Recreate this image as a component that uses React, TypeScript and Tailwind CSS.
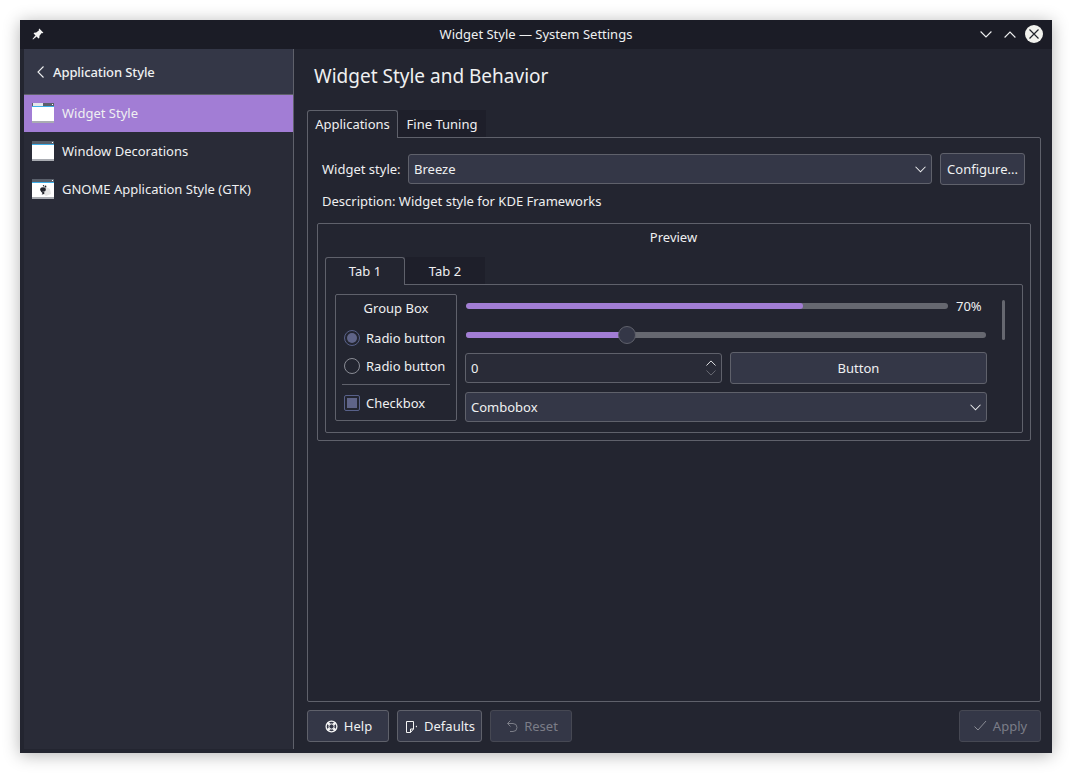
import React from 'react';

const Chevron: React.FC<{ up?: boolean; dim?: boolean; className?: string }> = ({ up, dim, className }) => (
  <svg viewBox="0 0 12 7" className={className} fill="none" stroke="currentColor" strokeWidth="1.1">
    <path d={up ? 'M.6 6.500 6 1l5.400 5.500' : 'M.6.500 6 6l5.400-5.500'} opacity={dim ? 0.35 : 1} />
  </svg>
);

const WindowIcon: React.FC<{ variant: 'widget' | 'deco' | 'gtk' }> = ({ variant }) => (
  <svg width="22" height="20" viewBox="0 0 22 20" className="shrink-0">
    <rect x="0" y="0" width="22" height="20" fill="#ffffff" />
    <rect x="0" y="0" width="22" height="3" fill="#5a606b" />
    {variant === 'widget' && <rect x="1" y="0" width="10" height="3" fill="#e4e6ea" />}
    <rect x="0" y="3" width="22" height="1" fill="#3daee9" />
    <rect x="20" y="1" width="1" height="1" fill="#ffffff" />
    <rect x="0" y="18" width="22" height="2" fill="#a9acb2" />
    {variant === 'gtk' && (
      <g>
        <path d="M12 7l6 3 1 5-5 2-3-2z" fill="#e6e6e6" />
        <ellipse cx="11" cy="10.500" rx="2.800" ry="2.200" fill="#22242c" />
        <path d="M9 11.500c1.500 1 3.500 1.300 3.500 2.500s-1.500 1.700-3 1.300c1-.5 1.200-1 .6-1.700-.7-.6-1.300-1.200-1.100-2.100z" fill="#22242c" />
        <circle cx="13.500" cy="7.500" r=".9" fill="#22242c" />
        <circle cx="11.500" cy="6.800" r=".7" fill="#22242c" />
      </g>
    )}
  </svg>
);

const NavItem: React.FC<{ label: string; variant: 'widget' | 'deco' | 'gtk'; selected?: boolean }> = ({ label, variant, selected }) => (
  <div className={`h-[37px] mb-px pb-[2px] flex items-center pl-2 gap-2 ${selected ? 'bg-[#a27dd5]' : ''}`}>
    <WindowIcon variant={variant} />
    <span>{label}</span>
  </div>
);

const Combo: React.FC<{ label: string; className?: string }> = ({ label, className }) => (
  <div className={`h-[30px] rounded-[3px] border border-[#5f616b] bg-[#343747] flex items-center justify-between pl-[5px] pr-[5px] ${className ?? ''}`}>
    <span>{label}</span>
    <Chevron className="w-[11px] h-[7px]" />
  </div>
);

const PushButton: React.FC<{ disabled?: boolean; className?: string; children: React.ReactNode }> = ({ disabled, className, children }) => (
  <div className={`h-[32px] rounded-[3px] border flex items-center justify-center gap-1 bg-[#343747] ${disabled ? 'border-[#464853] text-[#7b7d87]' : 'border-[#5f616b]'} ${className ?? ''}`}>
    {children}
  </div>
);

export default function App() {
  return (
    <div className="w-[1072px] h-[773px] bg-white p-5 font-['Noto_Sans',sans-serif] text-[13px] leading-[18px] text-[#eff0f1] overflow-hidden">
      <div className="w-[1032px] h-[733px] flex flex-col bg-[#232530] shadow-[0_2px_16px_rgba(0,0,0,0.3)]">
        {/* titlebar */}
        <div className="h-[29px] shrink-0 bg-[#1b1c26] flex items-center pl-[12px] pr-[9px] pb-[1px]">
          <div className="w-[80px]">
            <svg width="12" height="12" viewBox="0 0 12 12" fill="#f4f4f4">
              <path d="M7.300.6 11.400 4.700 10.500 5.300 9.700 4.900 7.500 7.800 7.300 9.900 6.500 10.400 1.600 5.500 2.100 4.700 4.200 4.500 7.100 2.300 6.700 1.500z" />
              <path d="M3.500 7.200 4.800 8.500 1 11.500.5 11z" />
            </svg>
          </div>
          <span className="flex-1 text-center pr-[3px]">Widget Style — System Settings</span>
          <div className="w-[80px] flex items-center justify-end">
            <Chevron className="w-[12px] h-[7px] mr-[12px]" />
            <Chevron up className="w-[12px] h-[7px] mr-[9px]" />
            <div className="w-[18px] h-[18px] rounded-full bg-[#f2f2ee] flex items-center justify-center">
              <svg width="10" height="10" viewBox="0 0 10 10" stroke="#22242c" strokeWidth="1.200">
                <path d="M.5.500l9 9M9.500.500l-9 9" />
              </svg>
            </div>
          </div>
        </div>

        <div className="flex-1 flex min-h-0">
          {/* sidebar */}
          <div className="w-[274px] shrink-0 pl-1 pb-1 flex">
            <div className="flex-1 bg-[#292b37] border-r border-[#5f616b]">
              <div className="h-[46px] bg-[#343747] border-b border-[#5f616b] flex items-center pl-[13px] gap-[9px]">
                <svg width="7" height="12" viewBox="0 0 7 12" fill="none" stroke="#eff0f1" strokeWidth="1.100">
                  <path d="M6.500.5 1 6l5.500 5.500" />
                </svg>
                <span className="font-medium tracking-[-0.1px]">Application Style</span>
              </div>
              <NavItem label="Widget Style" variant="widget" selected />
              <NavItem label="Window Decorations" variant="deco" />
              <NavItem label="GNOME Application Style (GTK)" variant="gtk" />
            </div>
          </div>

          {/* main pane */}
          <div className="flex-1 min-w-0 flex flex-col pl-[13px] pr-[11px] pb-[11px]">
            <div className="h-[61px] shrink-0 pl-[7px] pt-[12px] text-[19px] leading-[30px]">Widget Style and Behavior</div>

            <div className="flex h-[27px] shrink-0">
              <div className="w-[91px] h-[28px] pb-[2px] z-10 rounded-t-[3px] border border-b-0 border-[#5f616b] bg-[#232530] flex items-center justify-center">Applications</div>
              <div className="w-[88px] bg-[#1e1f2a] flex items-center justify-center">Fine Tuning</div>
            </div>

            <div className="flex-1 min-h-0 border border-[#5f616b] rounded-b-[2px] rounded-tr-[2px] pl-[9px] pr-[9px] pt-[15px]">
              <div className="flex items-center h-[32px] pl-[5px] pr-[6px]">
                <span className="w-[86px] shrink-0">Widget style:</span>
                <Combo label="Breeze" className="flex-1" />
                <PushButton className="w-[85px] ml-2">Configure...</PushButton>
              </div>
              <div className="pl-[5px] mt-[7px] h-[18px]">Description: Widget style for KDE Frameworks</div>

              {/* preview */}
              <div className="mt-[13px] h-[218px] border border-[#5f616b] rounded-[2px] pl-[7px] pr-[7px] pt-1">
                <div className="text-center h-[18px] pr-px">Preview</div>
                <div className="flex mt-[11px] h-[27px]">
                  <div className="w-[80px] h-[28px] pb-[2px] z-10 rounded-t-[3px] border border-b-0 border-[#5f616b] bg-[#232530] flex items-center justify-center">Tab 1</div>
                  <div className="w-[80px] bg-[#1e1f2a] flex items-center justify-center">Tab 2</div>
                </div>
                <div className="h-[149px] border border-[#5f616b] rounded-b-[2px] rounded-tr-[2px] pl-[9px] pt-[9px] flex">
                  {/* group box */}
                  <div className="w-[122px] h-[127px] shrink-0 border border-[#5f616b] rounded-[2px] px-[6px] pt-1">
                    <div className="text-center h-[18px]">Group Box</div>
                    <div className="flex items-center gap-[6px] pl-[2px] mt-[12px] h-[18px]">
                      <div className="w-[16px] h-[16px] rounded-full border border-[#58618a] flex items-center justify-center">
                        <div className="w-[10px] h-[10px] rounded-full bg-[#5f6488]" />
                      </div>
                      <span>Radio button</span>
                    </div>
                    <div className="flex items-center gap-[6px] pl-[2px] mt-[10px] h-[18px]">
                      <div className="w-[16px] h-[16px] rounded-full border border-[#8a8c95]" />
                      <span>Radio button</span>
                    </div>
                    <div className="h-px bg-[#5f616b] mt-[9px]" />
                    <div className="flex items-center gap-[6px] pl-[2px] mt-[9px] h-[18px]">
                      <div className="w-[16px] h-[16px] rounded-[2px] border border-[#58618a] flex items-center justify-center">
                        <div className="w-[10px] h-[10px] bg-[#5f6488]" />
                      </div>
                      <span>Checkbox</span>
                    </div>
                  </div>

                  {/* controls */}
                  <div className="w-[522px] shrink-0 ml-2">
                    <div className="flex items-center h-[24px] pl-px">
                      <div className="w-[482px] h-[6px] rounded-full bg-[#666870] overflow-hidden">
                        <div className="w-[337px] h-full rounded-full bg-[#a27dd5]" />
                      </div>
                      <span className="ml-2">70%</span>
                    </div>
                    <div className="relative h-[18px] mt-[8px] pl-px flex items-center pr-px">
                      <div className="w-full h-[6px] rounded-full bg-[#666870]">
                        <div className="w-[161px] h-full rounded-full bg-[#a27dd5]" />
                      </div>
                      <div className="absolute left-[153px] top-0 w-[18px] h-[18px] rounded-full bg-[#343747] border border-[#5f616b]" />
                    </div>
                    <div className="flex items-center mt-2 h-[32px] gap-2">
                      <div className="w-[257px] h-[30px] rounded-[3px] border border-[#5f616b] bg-[#292b37] flex items-center justify-between pl-[5px] pr-[5px]">
                        <span>0</span>
                        <div className="flex flex-col gap-1">
                          <Chevron up className="w-[10px] h-[6px]" />
                          <Chevron dim className="w-[10px] h-[6px]" />
                        </div>
                      </div>
                      <PushButton className="flex-1">Button</PushButton>
                    </div>
                    <Combo label="Combobox" className="mt-2" />
                  </div>
                  <div className="w-[3px] h-[40px] ml-[15px] mt-[6px] rounded-full bg-[#666870]" />
                </div>
              </div>
            </div>

            {/* footer */}
            <div className="flex items-center gap-2 mt-2 h-[32px] shrink-0">
              <PushButton className="w-[82px]">
                <svg width="16" height="16" viewBox="0 0 16 16" fill="none" stroke="#f4f4f4">
                  <circle cx="7.500" cy="8.500" r="5.400" strokeWidth="1.300" />
                  <circle cx="7.500" cy="8.500" r="2.600" strokeWidth="1" />
                  <path d="M3.600 4.600 5.600 6.600M11.400 4.600 9.400 6.600M3.600 12.400 5.600 10.400M11.400 12.400 9.400 10.400" strokeWidth="2.600" />
                </svg>
                <span>Help</span>
              </PushButton>
              <PushButton className="w-[85px]">
                <svg width="16" height="16" viewBox="0 0 16 16" fill="none" stroke="#f4f4f4">
                  <path d="M2.500 3.500h7v7.500l-3 3.500h-4zM9.500 11h-3v3.500" />
                  <path d="M13 7.500v2l-1.500-1z" fill="#f4f4f4" stroke="none" />
                </svg>
                <span>Defaults</span>
              </PushButton>
              <PushButton disabled className="w-[82px]">
                <svg width="16" height="16" viewBox="0 0 16 16" fill="none" stroke="#7b7d87">
                  <path d="M6.500 2.500 3.500 5.500l3 3M3.500 5.500H9a4 4 0 0 1 0 8H6" />
                </svg>
                <span>Reset</span>
              </PushButton>
              <PushButton disabled className="w-[82px] ml-auto">
                <svg width="16" height="16" viewBox="0 0 16 16" fill="none" stroke="#8a8c95">
                  <path d="M1.500 8.500l3.500 3.500 8-9" />
                </svg>
                <span>Apply</span>
              </PushButton>
            </div>
          </div>
        </div>
      </div>
    </div>
  );
}
